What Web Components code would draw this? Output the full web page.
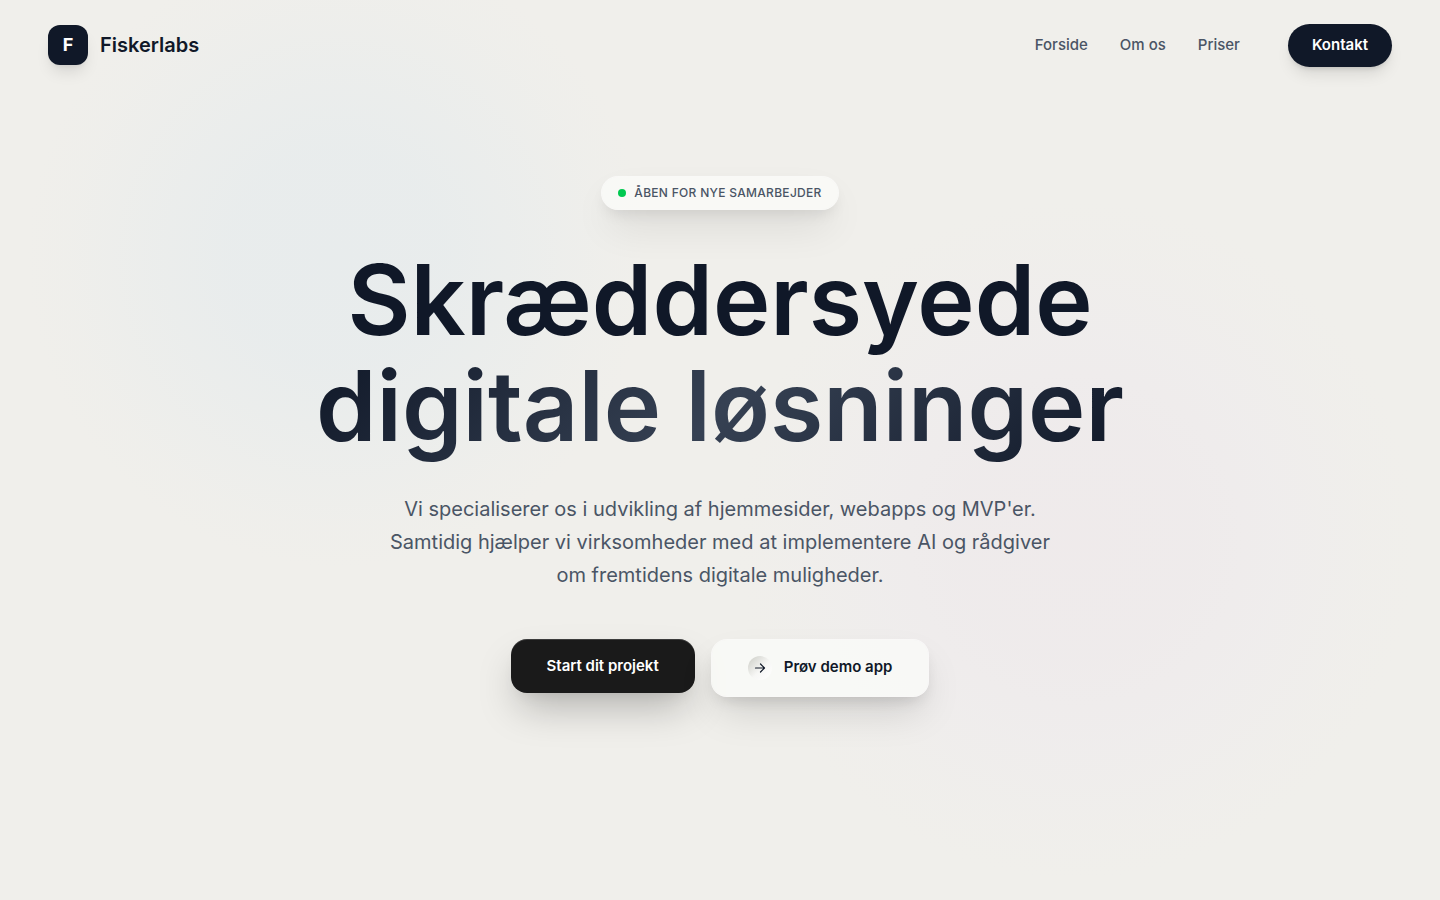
<!DOCTYPE html>
<html lang="da">
<head>
<meta charset="utf-8">
<meta name="viewport" content="width=device-width, initial-scale=1">
<title>Fiskerlabs</title>
<style>
  :root { --ink: #101828; --muted: #4a5565; --page: #f0efeb; }
  html, body { margin: 0; }
  body { font-family: Inter, "Liberation Sans", sans-serif; color: var(--ink); background: var(--page); }
</style>
</head>
<body>
<fl-page>
  <fl-header slot="header">
    <fl-brand slot="brand" mark="F">Fiskerlabs</fl-brand>
    <fl-nav-link href="#forside">Forside</fl-nav-link>
    <fl-nav-link href="#om-os">Om os</fl-nav-link>
    <fl-nav-link href="#priser">Priser</fl-nav-link>
    <fl-button slot="action" variant="pill">Kontakt</fl-button>
  </fl-header>
  <fl-hero>
    <fl-badge slot="badge">Åben for nye samarbejder</fl-badge>
    <span slot="title">Skræddersyede</span>
    <span slot="accent">digitale løsninger</span>
    <span slot="lead">Vi specialiserer os i udvikling af hjemmesider, webapps og MVP'er. Samtidig hjælper vi virksomheder med at implementere AI og rådgiver om fremtidens digitale muligheder.</span>
    <fl-button slot="actions" variant="primary">Start dit projekt</fl-button>
    <fl-button slot="actions" variant="glass" arrow>Prøv demo app</fl-button>
  </fl-hero>
</fl-page>
<script>
  const define = (name, markup, setup) => {
    const template = document.createElement('template');
    template.innerHTML = markup;
    customElements.define(name, class extends HTMLElement {
      constructor() {
        super();
        this.attachShadow({ mode: 'open' }).append(template.content.cloneNode(true));
      }
      connectedCallback() { if (setup) setup(this, this.shadowRoot); }
    });
  };

  define('fl-page', `
    <style>
      :host {
        display: flex; flex-direction: column; min-height: 100vh;
        background:
          radial-gradient(circle 310px at 23.4% 28.6%, rgba(224,233,238,.5), rgba(224,233,238,.46) 35%, rgba(224,233,238,.28) 60%, rgba(224,233,238,.07) 86%, rgba(224,233,238,0)),
          radial-gradient(circle 340px at 74.7% 60%, rgba(238,230,235,.5), rgba(237,230,236,.44) 35%, rgba(237,231,240,.28) 60%, rgba(237,231,240,.07) 86%, rgba(237,231,240,0)),
          var(--page);
      }
    </style>
    <slot name="header"></slot>
    <main><slot></slot></main>`);

  define('fl-header', `
    <style>
      :host { display: block; }
      header { display: flex; align-items: center; justify-content: space-between; padding: 24px 48px; }
      .end { display: flex; align-items: center; gap: 48px; }
      nav { display: flex; gap: 32px; }
    </style>
    <header>
      <slot name="brand"></slot>
      <div class="end"><nav aria-label="Hovedmenu"><slot></slot></nav><slot name="action"></slot></div>
    </header>`);

  define('fl-brand', `
    <style>
      :host { display: block; }
      a { display: flex; align-items: center; gap: 12px; padding-bottom: 2px; color: var(--ink); text-decoration: none; font-size: 20px; line-height: 28px; font-weight: 600; }
      .mark { display: grid; place-items: center; width: 40px; height: 40px; border-radius: 12px; background: var(--ink); color: #fff; font-size: 18px; font-weight: 700; box-shadow: 0 10px 15px -3px rgba(0,0,0,.1), 0 4px 6px -4px rgba(0,0,0,.1); }
    </style>
    <a href="#forside"><span class="mark"></span><span><slot></slot></span></a>`,
    (host, root) => { root.querySelector('.mark').textContent = host.getAttribute('mark'); });

  define('fl-nav-link', `
    <style>
      :host { display: block; }
      a { display: block; padding-bottom: 1px; color: var(--muted); text-decoration: none; font-size: 15px; line-height: 22px; font-weight: 500; }
    </style>
    <a><slot></slot></a>`,
    (host, root) => { root.querySelector('a').href = host.getAttribute('href'); });

  define('fl-badge', `
    <style>
      :host { display: inline-flex; align-items: center; gap: 8px; padding: 8px 16px; border: 1px solid rgba(255,255,255,.6); border-radius: 17px; background: rgba(252,253,251,.7); background-clip: padding-box; box-shadow: 0 20px 40px -8px rgba(0,0,0,.14), 0 8px 16px -6px rgba(0,0,0,.12); color: var(--muted); font-size: 12px; line-height: 16px; font-weight: 500; text-transform: uppercase; letter-spacing: .025em; }
      i { width: 8px; height: 8px; border-radius: 50%; background: #00c950; }
    </style>
    <i></i><span><slot></slot></span>`);

  define('fl-button', `
    <style>
      :host { display: block; }
      button { display: flex; align-items: center; justify-content: center; gap: 12px; margin: 0; border: 0; font: 600 15px/22px Inter, "Liberation Sans", sans-serif; cursor: pointer; }
      :host([variant=pill]) button { padding: 10px 24px 11px; border-radius: 22px; background: var(--ink); color: #fff; box-shadow: 0 10px 15px -3px rgba(0,0,0,.1), 0 4px 6px -4px rgba(0,0,0,.2); }
      :host([variant=primary]) button { padding: 16px 36px; border-radius: 16px; background: #1a1a1a; color: #fff; box-shadow: 0 20px 40px -8px rgba(0,0,0,.28), 0 8px 16px -8px rgba(0,0,0,.1), inset 0 1px 0 rgba(255,255,255,.15); }
      :host([variant=glass]) button { padding: 16px 36px; border: 1px solid rgba(255,255,255,.6); border-radius: 16px; background: rgba(252,253,251,.68); background-clip: padding-box; color: var(--ink); box-shadow: 0 20px 40px -8px rgba(0,0,0,.15), 0 8px 16px -6px rgba(0,0,0,.14); }
      .icon { display: none; }
      .label { display: block; }
      :host([arrow]) .label { padding-bottom: 2px; }
      :host([arrow]) .icon { display: grid; place-items: center; width: 24px; height: 24px; border-radius: 50%; background: linear-gradient(135deg, #cbccc5, #f7f7f5 55%, #fff); }
      svg { display: block; }
    </style>
    <button type="button">
      <span class="icon" aria-hidden="true"><svg width="12" height="12" viewBox="0 0 12 12" fill="none" stroke="currentColor" stroke-width="1.2" stroke-linecap="round" stroke-linejoin="round"><path d="M1.5 6h9M6.5 2l4 4-4 4"/></svg></span>
      <span class="label"><slot></slot></span>
    </button>`);

  define('fl-hero', `
    <style>
      :host { display: block; }
      section { display: flex; flex-direction: column; align-items: center; padding: 85px 24px 80px; text-align: center; }
      h1 { margin: 37px 0 26px; font-size: 97px; line-height: 106px; font-weight: 600; }
      h1 span { display: block; }
      .accent { width: fit-content; margin: 0 auto; padding-bottom: 8px; background: linear-gradient(135deg, #101828, #364153 50%, #101828); background-clip: text; -webkit-background-clip: text; color: transparent; }
      p { max-width: 672px; margin: 0 0 47px; color: var(--muted); font-size: 20px; line-height: 33px; }
      .actions { display: flex; flex-wrap: wrap; justify-content: center; align-items: flex-start; gap: 16px; }
    </style>
    <section>
      <slot name="badge"></slot>
      <h1><span><slot name="title"></slot></span><span class="accent"><slot name="accent"></slot></span></h1>
      <p><slot name="lead"></slot></p>
      <div class="actions"><slot name="actions"></slot></div>
    </section>`);
</script>
</body>
</html>
